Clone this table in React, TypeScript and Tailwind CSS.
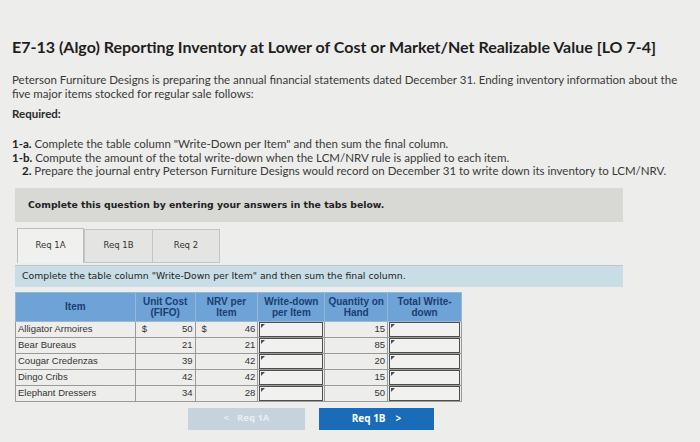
const rows = [
  { item: "Alligator Armoires", cost: 50, nrv: 46, qty: 15, dollar: true },
  { item: "Bear Bureaus", cost: 21, nrv: 21, qty: 85 },
  { item: "Cougar Credenzas", cost: 39, nrv: 42, qty: 20 },
  { item: "Dingo Cribs", cost: 42, nrv: 42, qty: 15 },
  { item: "Elephant Dressers", cost: 34, nrv: 28, qty: 50 },
];

function InputCell() {
  return (
    <td className="border border-[#9a9a98] p-0">
      <div className="relative mx-[1px] h-[15px] border border-[#4d4d4d] bg-[#f1f1ef]">
        <span className="absolute left-[1px] top-[1px] h-0 w-0 border-l-[4px] border-b-[4px] border-l-[#4a4a6a] border-b-transparent" />
      </div>
    </td>
  );
}

export default function App() {
  return (
    <div className="h-[442px] w-[700px] overflow-hidden bg-[#ededeb] font-['Lato',sans-serif] text-[#2b2b2b]">
      <div className="px-[12px] pt-[38px]">
        <h1 className="text-[16px] font-bold leading-[18px] text-[#1e1e1e]">
          E7-13 (Algo) Reporting Inventory at Lower of Cost or Market/Net Realizable Value [LO 7-4]
        </h1>
        <p className="mt-[17px] text-[11.5px] leading-[14px] text-[#3a3a3a]">
          Peterson Furniture Designs is preparing the annual financial statements dated December 31. Ending inventory information about the
          <br />
          five major items stocked for regular sale follows:
        </p>
        <p className="mt-[6px] text-[11.5px] font-bold leading-[14px]">Required:</p>
        <div className="mt-[16px] text-[11.5px] leading-[13.5px] text-[#3a3a3a]">
          <p>
            <b className="text-[#222]">1-a.</b> Complete the table column "Write-Down per Item" and then sum the final column.
          </p>
          <p>
            <b className="text-[#222]">1-b.</b> Compute the amount of the total write-down when the LCM/NRV rule is applied to each item.
          </p>
          <p className="pl-[10px]">
            <b className="text-[#222]">2.</b> Prepare the journal entry Peterson Furniture Designs would record on December 31 to write down its inventory to LCM/NRV.
          </p>
        </div>
      </div>

      <div className="ml-[15px] mt-[10px] w-[608px]">
        <div className="flex h-[34px] items-center bg-[#d8d8d5] pl-[13px] font-['DejaVu_Sans',sans-serif] text-[9.3px] font-bold text-[#222]">
          Complete this question by entering your answers in the tabs below.
        </div>
        <div className="mt-[6px] flex h-[35px] items-end pl-[2px]">
          <div className="flex h-[35px] w-[67px] items-center justify-center border border-b-0 border-[#bdbdbb] bg-[#f0f0ee] font-['DejaVu_Sans',sans-serif] text-[8.5px] text-[#333]">
            Req 1A
          </div>
          <div className="flex h-[34px] w-[69px] items-center justify-center border border-[#c4c4c2] bg-[#e4e4e2] font-['DejaVu_Sans',sans-serif] text-[8.5px] text-[#333]">
            Req 1B
          </div>
          <div className="flex h-[34px] w-[67px] items-center justify-center border border-l-0 border-[#c4c4c2] bg-[#e4e4e2] font-['DejaVu_Sans',sans-serif] text-[8.5px] text-[#333]">
            Req 2
          </div>
        </div>
        <div className="mt-[2px] flex h-[22px] items-center border-t border-[#b9c9d2] bg-[#c9dde7] pl-[7px] font-['DejaVu_Sans',sans-serif] text-[9.3px] text-[#222]">
          Complete the table column "Write-Down per Item" and then sum the final column.
        </div>

        <table className="mt-[5px] w-[447px] border-collapse font-['Liberation_Sans',sans-serif] text-[9.5px] text-[#333]">
          <thead>
            <tr className="h-[29px] bg-[#6da3d6] text-center text-[10px] leading-[11px] text-[#1c3d72]">
              <th className="w-[120px] border border-[#9ab7d2] font-bold">Item</th>
              <th className="w-[60px] border border-[#9ab7d2] font-bold">
                Unit Cost
                <br />
                (FIFO)
              </th>
              <th className="w-[63px] border border-[#9ab7d2] font-bold">
                NRV per
                <br />
                Item
              </th>
              <th className="w-[67px] border border-[#9ab7d2] font-bold">
                Write-down
                <br />
                per Item
              </th>
              <th className="w-[63px] border border-[#9ab7d2] font-bold">
                Quantity on
                <br />
                Hand
              </th>
              <th className="w-[74px] border border-[#9ab7d2] font-bold">
                Total Write-
                <br />
                down
              </th>
            </tr>
          </thead>
          <tbody>
            {rows.map((r) => (
              <tr key={r.item} className="h-[16px] leading-[14px]">
                <td className="border border-[#9a9a98] pl-[2px]">{r.item}</td>
                <td className="border border-[#9a9a98] px-[2px]">
                  <div className="flex justify-between">
                    <span className="pl-[4px]">{r.dollar ? "$" : ""}</span>
                    <span>{r.cost}</span>
                  </div>
                </td>
                <td className="border border-[#9a9a98] px-[2px]">
                  <div className="flex justify-between">
                    <span className="pl-[4px]">{r.dollar ? "$" : ""}</span>
                    <span>{r.nrv}</span>
                  </div>
                </td>
                <InputCell />
                <td className="border border-[#9a9a98] px-[2px] text-right">{r.qty}</td>
                <InputCell />
              </tr>
            ))}
          </tbody>
        </table>

        <div className="mt-[6px] flex gap-[14px] pl-[173px]">
          <div className="flex h-[22px] w-[117px] items-center justify-center gap-[8px] bg-[#c5d3dd] font-['Open_Sans',sans-serif] text-[9.5px] font-bold text-[#e9eef2]">
            <span>&lt;</span>
            <span>Req 1A</span>
          </div>
          <div className="flex h-[22px] w-[115px] items-center justify-center gap-[10px] bg-[#1a6bb8] font-['Open_Sans',sans-serif] text-[10px] font-bold text-white">
            <span>Req 1B</span>
            <span>&gt;</span>
          </div>
        </div>
      </div>
    </div>
  );
}
